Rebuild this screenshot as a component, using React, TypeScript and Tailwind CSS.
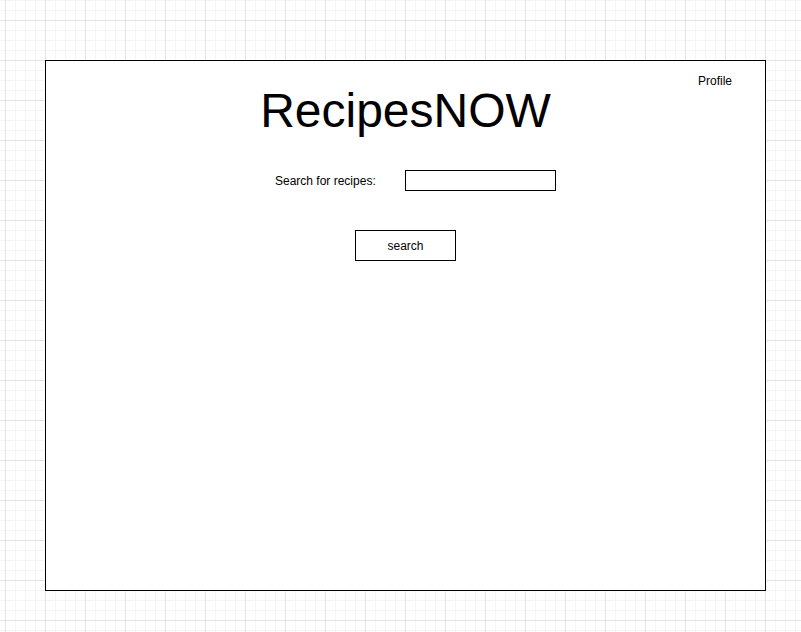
import React from "react";

export default function App() {
  return (
    <div className="w-[801px] h-[632px] bg-white pl-[45px] pt-[60px] [font-family:'Liberation_Sans',Arial,sans-serif] text-black [background-image:linear-gradient(to_right,#e4e4e4_1px,transparent_1px),linear-gradient(to_bottom,#e4e4e4_1px,transparent_1px),linear-gradient(to_right,#f5f5f5_1px,transparent_1px),linear-gradient(to_bottom,#f5f5f5_1px,transparent_1px)] [background-size:40px_40px,40px_40px,10px_10px,10px_10px] [background-position:5px_0,0_20px,5px_0,0_0]">
      <div className="w-[721px] h-[531px] border border-black bg-white flex flex-col">
        <div className="h-[26px] pt-[13px] pr-[33px] flex justify-end text-[12px] leading-[14px]">
          <span>Profile</span>
        </div>
        <h1 className="text-center text-[48px] leading-[48px]">RecipesNOW</h1>
        <div className="mt-[35px] flex items-center h-[21px] pl-[229px]">
          <label className="w-[130px] text-[12px] leading-[14px]">Search for recipes:</label>
          <input type="text" className="w-[151px] h-[21px] border border-black bg-white outline-none" />
        </div>
        <div className="mt-[39px] pl-[309px]">
          <button className="w-[101px] h-[31px] border border-black bg-white text-[12px] leading-[14px] flex items-center justify-center">
            search
          </button>
        </div>
      </div>
    </div>
  );
}
